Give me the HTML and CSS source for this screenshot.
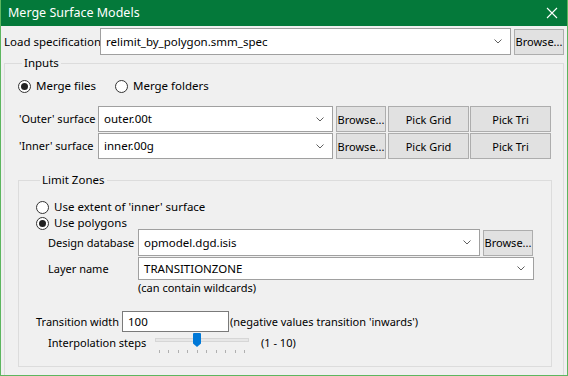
FILE: index.html
```html
<!DOCTYPE html>
<html lang="en">
<head>
    <meta charset="UTF-8">
    <title>Merge Surface Models</title>
    <link rel="stylesheet" href="styles.css">
</head>
<body>
    <div class="window">
        <div class="titlebar">
            <span class="title">Merge Surface Models</span>
            <svg class="close" width="12" height="12" viewBox="0 0 12 12">
                <path d="M1 1L11 11M11 1L1 11" stroke="#fff" stroke-width="1.1"/>
            </svg>
        </div>

        <div class="row spec-row">
            <label class="spec-label">Load specification</label>
            <div class="combo spec-combo">
                <span>relimit_by_polygon.smm_spec</span>
                <svg class="chev" width="8" height="5" viewBox="0 0 8 5"><path d="M0.5 0.5L4 4L7.5 0.5" fill="none" stroke="#606060"/></svg>
            </div>
            <button class="btn browse">Browse...</button>
        </div>

        <fieldset class="group inputs">
            <legend>Inputs</legend>
            <div class="radios">
                <span class="radio checked"></span><span class="radio-text">Merge files</span>
                <span class="radio folders"></span><span class="radio-text">Merge folders</span>
            </div>

            <div class="row surface-row first">
                <label class="surface-label">'Outer' surface</label>
                <div class="combo surface-combo">
                    <span>outer.00t</span>
                    <svg class="chev" width="8" height="5" viewBox="0 0 8 5"><path d="M0.5 0.5L4 4L7.5 0.5" fill="none" stroke="#606060"/></svg>
                </div>
                <button class="btn browse">Browse...</button>
                <button class="btn pick">Pick Grid</button>
                <button class="btn pick">Pick Tri</button>
            </div>
            <div class="row surface-row">
                <label class="surface-label">'Inner' surface</label>
                <div class="combo surface-combo">
                    <span>inner.00g</span>
                    <svg class="chev" width="8" height="5" viewBox="0 0 8 5"><path d="M0.5 0.5L4 4L7.5 0.5" fill="none" stroke="#606060"/></svg>
                </div>
                <button class="btn browse">Browse...</button>
                <button class="btn pick">Pick Grid</button>
                <button class="btn pick">Pick Tri</button>
            </div>

            <fieldset class="group zones">
                <legend>Limit Zones</legend>
                <div class="radio-line first-radio">
                    <span class="radio"></span><span class="radio-text">Use extent of 'inner' surface</span>
                </div>
                <div class="radio-line">
                    <span class="radio checked"></span><span class="radio-text">Use polygons</span>
                </div>

                <div class="row db-row">
                    <label class="poly-label">Design database</label>
                    <div class="combo db-combo">
                        <span>opmodel.dgd.isis</span>
                        <svg class="chev" width="8" height="5" viewBox="0 0 8 5"><path d="M0.5 0.5L4 4L7.5 0.5" fill="none" stroke="#606060"/></svg>
                    </div>
                    <button class="btn browse">Browse...</button>
                </div>
                <div class="row layer-row">
                    <label class="poly-label">Layer name</label>
                    <div class="combo layer-combo">
                        <span>TRANSITIONZONE</span>
                        <svg class="chev" width="8" height="5" viewBox="0 0 8 5"><path d="M0.5 0.5L4 4L7.5 0.5" fill="none" stroke="#606060"/></svg>
                    </div>
                </div>
                <div class="hint">(can contain wildcards)</div>

                <div class="row width-row">
                    <label class="width-label">Transition width</label>
                    <div class="text-input">100</div>
                    <span class="note">(negative values transition 'inwards')</span>
                </div>
                <div class="row steps-row">
                    <label class="steps-label">Interpolation steps</label>
                    <div class="slider">
                        <div class="track"></div>
                        <div class="thumb"></div>
                        <div class="ticks">
                            <i></i><i></i><i></i><i></i><i></i><i></i><i></i><i></i><i></i><i></i>
                        </div>
                    </div>
                    <span class="range">(1 - 10)</span>
                </div>
            </fieldset>
        </fieldset>
    </div>
</body>
</html>
```

FILE: styles.css
```css
* {
    box-sizing: border-box;
}
body {
    margin: 0;
    font-family: "Noto Sans", "Open Sans", sans-serif;
    font-size: 11px;
    line-height: 16px;
    color: #000;
    background: #f0f0f0;
}
.window {
    width: 568px;
    height: 376px;
    border: 1px solid #5db65f;
    border-top: none;
    background: #f0f0f0;
    overflow: hidden;
}
.titlebar {
    height: 26px;
    background: #04793a;
    color: #fff;
    display: flex;
    align-items: center;
    justify-content: space-between;
    padding: 0 9px 0 7px;
    font-size: 12.5px;
}
.row {
    display: flex;
    align-items: center;
    white-space: nowrap;
}
.row label {
    flex: none;
}
.combo {
    display: flex;
    align-items: center;
    justify-content: space-between;
    background: #fff;
    border: 1px solid #a0a0a0;
    padding: 0 8px 0 5px;
    font-size: 11.5px;
}
.combo span {
    white-space: nowrap;
}
.btn {
    font-family: inherit;
    font-size: 11px;
    background: #e1e1e1;
    border: 1px solid #adadad;
    padding: 0;
    color: #000;
    white-space: nowrap;
}

/* load specification */
.spec-row {
    margin: 2px 0 0 3px;
}
.spec-label {
    width: 96px;
    font-size: 11.5px;
}
.spec-combo {
    width: 411px;
    height: 27px;
    margin-right: 3px;
}
.browse {
    width: 50px;
    height: 26px;
}

/* group boxes */
.group {
    border: 1px solid #dcdcdc;
    margin: 0;
    padding: 0;
    min-width: 0;
}
.group legend {
    padding: 0 2px;
    margin-left: 4px;
    line-height: 14px;
    font-size: 11.5px;
}
.inputs {
    margin: 1px 0 0 3px;
    width: 560px;
    height: 324px;
    padding: 0 0 0 13px;
}
.radios {
    display: flex;
    align-items: center;
    margin-top: 8px;
    height: 16px;
    font-size: 11.5px;
}
.radio {
    flex: none;
    width: 13px;
    height: 13px;
    border: 1px solid #333;
    border-radius: 50%;
    background: #fff;
    display: flex;
    align-items: center;
    justify-content: center;
}
.radio.checked::after {
    content: "";
    width: 7px;
    height: 7px;
    border-radius: 50%;
    background: #222;
}
.radio-text {
    margin-left: 5px;
    white-space: nowrap;
}
.radio.folders {
    margin-left: 19px;
}
.surface-row {
    margin-top: 1px;
}
.surface-row.first {
    margin-top: 12px;
}
.surface-label {
    width: 79px;
    margin-left: 1px;
}
.surface-combo {
    width: 235px;
    height: 26px;
    margin-right: 3px;
}
.surface-row .browse {
    margin-right: 2px;
}
.pick {
    width: 81px;
    height: 26px;
    margin-right: 1px;
}

/* limit zones */
.zones {
    margin-top: 14px;
    width: 534px;
    height: 194px;
    padding: 0 0 0 17px;
}
.radio-line {
    display: flex;
    align-items: center;
    height: 16px;
    font-size: 11.5px;
}
.first-radio {
    margin-top: 12px;
}
.db-row {
    margin-top: -2px;
}
.poly-label {
    width: 90px;
    margin-left: 12px;
}
.db-combo {
    width: 342px;
    height: 27px;
    margin-right: 3px;
}
.layer-row {
    margin-top: 1px;
}
.layer-combo {
    width: 396px;
    height: 23px;
}
.hint {
    margin-left: 102px;
    line-height: 14px;
    margin-top: 1px;
}
.width-row {
    margin-top: 16px;
}
.width-label {
    width: 86px;
}
.text-input {
    width: 107px;
    height: 21px;
    background: #fff;
    border: 1px solid #7a7a7a;
    padding: 1px 0 0 5px;
    line-height: 18px;
    font-size: 11.5px;
    margin-right: 1px;
}
.steps-row {
    margin-top: 0;
}
.steps-label {
    width: 107px;
    margin-left: 12px;
}
.slider {
    position: relative;
    width: 94px;
    height: 22px;
}
.track {
    position: absolute;
    left: 0;
    right: 0;
    top: 6px;
    height: 4px;
    background: #e7e7e7;
    border: 1px solid #d6d6d6;
}
.thumb {
    position: absolute;
    left: 38px;
    top: 1px;
    width: 8px;
    height: 14px;
    background: #0078d7;
    border-radius: 1px 1px 0 0;
    clip-path: polygon(0 0, 100% 0, 100% 75%, 50% 100%, 0 75%);
}
.ticks {
    position: absolute;
    left: 4px;
    right: 4px;
    top: 18px;
    display: flex;
    justify-content: space-between;
}
.ticks i {
    width: 1px;
    height: 3px;
    background: #b0b0b0;
}
.range {
    margin-left: 12px;
}
```
